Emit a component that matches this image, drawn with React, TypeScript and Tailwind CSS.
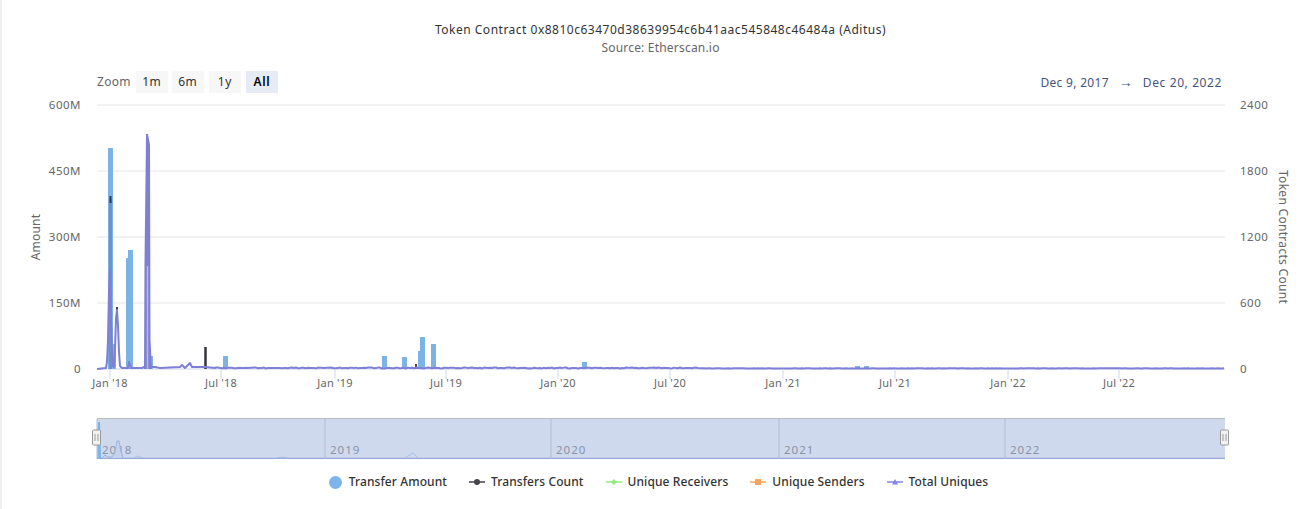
const font = "font-['Noto_Sans',sans-serif]";

const bars: [number, number, number][] = [
  [108, 113, 148], [113, 116, 344], [126, 128, 258], [128, 133, 250], [149, 153, 356],
  [223, 228, 356], [382, 387, 356], [402, 407, 357], [418, 420, 351], [420, 425, 337],
  [431, 436, 344], [582, 587, 362], [855, 860, 366], [864, 869, 366],
];

const spikes: [number, number][] = [
  [97, 369], [106, 368], [107, 362], [108, 340], [109, 290], [110, 270], [111, 320], [112, 352], [113, 366],
  [114, 367], [115, 350], [116, 318], [117, 310], [118, 325], [119, 352], [120, 366], [122, 368],
  [128, 368], [129, 362], [131, 368], [142, 368], [144, 367],
];

const afterSpike: [number, number][] = [
  [152, 367], [155, 367], [160, 368], [180, 367], [182, 365], [185, 368], [190, 363], [192, 367], [205, 367], [215, 368],
];

// small deterministic jitter for the flat tail of the series
function tail() {
  const pts: string[] = [];
  for (let x = 216; x <= 1225; x += 2) {
    const n = Math.sin(x * 12.9898) * 43758.5453;
    const r = n - Math.floor(n);
    const amp = x < 700 ? 1 : 0.3;
    pts.push(`${x},${(368.5 - r * amp).toFixed(1)}`);
  }
  return pts.join(" ");
}

const toPoints = (p: [number, number][]) => p.map(([x, y]) => `${x},${y}`).join(" ");
const purpleLine = toPoints(spikes) + " 146,367 " + toPoints(afterSpike) + " " + tail();

const grid = [
  { y: 105, left: "600M", right: "2400" },
  { y: 171, left: "450M", right: "1800" },
  { y: 237, left: "300M", right: "1200" },
  { y: 303, left: "150M", right: "600" },
  { y: 369, left: "0", right: "0" },
];

const months = [
  { x: 110, t: "Jan '18" }, { x: 221, t: "Jul '18" }, { x: 335, t: "Jan '19" }, { x: 446, t: "Jul '19" },
  { x: 558, t: "Jan '20" }, { x: 670, t: "Jul '20" }, { x: 783, t: "Jan '21" }, { x: 895, t: "Jul '21" },
  { x: 1008, t: "Jan '22" }, { x: 1119, t: "Jul '22" },
];

const years = [
  { x: 97, t: "2018" }, { x: 325, t: "2019" }, { x: 551, t: "2020" }, { x: 779, t: "2021" }, { x: 1005, t: "2022" },
];

function Handle({ x }: { x: number }) {
  return (
    <g transform={`translate(${x},430)`}>
      <rect x="-4" y="0" width="8" height="15" rx="1" fill="#f2f2f2" stroke="#999" />
      <path d="M-1.5 4V11M1.5 4V11" stroke="#999" fill="none" />
    </g>
  );
}

function Chart() {
  return (
    <svg width="1304" height="365" viewBox="0 0 1304 365" className="block">
      <g transform="translate(-2,-94)">
        {grid.map((g) => (
          <g key={g.y}>
            <line x1="97" x2="1225" y1={g.y} y2={g.y} stroke={g.y === 369 ? "#ccd6eb" : "#e6e6e6"} />
            <text x="81" y={g.y + 4} textAnchor="end" fontSize="11.5" fill="#666" letterSpacing="0.5">{g.left}</text>
            <text x="1240" y={g.y + 4} fontSize="11.5" fill="#666" letterSpacing="0.5">{g.right}</text>
          </g>
        ))}
        <text transform="translate(40,237) rotate(-90)" textAnchor="middle" fontSize="12" fill="#666" letterSpacing="0.2">Amount</text>
        <text transform="translate(1279,237) rotate(90)" textAnchor="middle" fontSize="12" fill="#666" letterSpacing="0.3">Token Contracts Count</text>

        {bars.map(([a, b, top]) => (
          <rect key={a} x={a} y={top} width={b - a} height={369 - top} fill="#7cb2e4" />
        ))}
        <rect x="109" y="199" width="3" height="170" fill="#6f94c4" />
        <path d="M110.500 203V196" stroke="#2d3a55" strokeWidth="2" />
        <path d="M117 322V307" stroke="#434348" strokeWidth="2" />
        <path d="M205.500 369V347" stroke="#333338" strokeWidth="2.500" />
        <path d="M416 369V364" stroke="#434348" strokeWidth="2" />
        <polyline points={purpleLine} fill="none" stroke="#7d80d4" strokeWidth="2" strokeLinejoin="round" />
        <path d="M144 369L144.500 262L145.500 180L146 134L148 134L150 145L150.500 340L152 369Z" fill="#7d80d4" />
        <path d="M147.500 369V266" stroke="#b7bbdc" strokeWidth="1.500" />

        {months.map((m) => (
          <g key={m.t}>
            <line x1={m.x} x2={m.x} y1="369" y2="379" stroke="#ccd6eb" />
            <text x={m.x} y="387" textAnchor="middle" fontSize="11" fill="#666" letterSpacing="0.2">{m.t}</text>
          </g>
        ))}

        <rect x="97" y="419" width="1128" height="40" fill="#cfd9ed" />
        <line x1="97" x2="1225" y1="418.500" y2="418.500" stroke="#bbb" />
        <line x1="97" x2="1225" y1="458.500" y2="458.500" stroke="#93a9d8" strokeWidth="1.500" />
        {years.map((y) => (
          <g key={y.t}>
            <line x1={y.x} x2={y.x} y1="419" y2="459" stroke="#b4bccd" />
            <text x={y.x + 5} y="454" fontSize="11.5" fill="#8a93a8" letterSpacing="1">{y.t}</text>
          </g>
        ))}
        <path d="M97.500 458L98 422H100L101 458Z" fill="#7cb5ec" />
        <path d="M102 458L105 455L108 457L112 457L115 452L117 441L119 441L121 452L123 458" fill="#c4d2ec" stroke="#98b4e2" />
        <path d="M134 458L137 456L140 457L143 458M405 458L413 453L418 458M276 458L282 457L288 458" fill="none" stroke="#a9bfe4" />
        <Handle x={96.500} />
        <Handle x={1224.500} />
      </g>
    </svg>
  );
}

function LegendItem({ label, color, marker }: { label: string; color: string; marker: "dot" | "diamond" | "square" | "triangle" }) {
  return (
    <div className="flex items-center gap-[6px]">
      <svg width="16" height="10" viewBox="0 0 16 10">
        <path d="M0 5H16" stroke={color} strokeWidth="1.500" />
        {marker === "dot" && <circle cx="8" cy="5" r="3" fill={color} />}
        {marker === "diamond" && <path d="M8 2L11 5L8 8L5 5Z" fill={color} />}
        {marker === "square" && <rect x="5" y="2" width="6" height="6" fill={color} />}
        {marker === "triangle" && <path d="M8 2L11 7.500H5Z" fill={color} />}
      </svg>
      <span>{label}</span>
    </div>
  );
}

export default function App() {
  return (
    <div className={`${font} w-[1306px] h-[509px] overflow-hidden bg-white border-l-2 border-[#eeeeee] text-[#333]`}>
      <div className="pt-[21px] pl-[13px] text-center text-[12px] leading-[18px]">
        <div className="text-[#333] tracking-[0.5px]">Token Contract 0x8810c63470d38639954c6b41aac545848c46484a (Aditus)</div>
        <div className="text-[#666] tracking-[0.2px]">Source: Etherscan.io</div>
      </div>
      <div className="flex items-center justify-between pl-[95px] pr-[84px] h-[24px] mt-[13px] text-[12px]">
        <div className="flex items-center gap-[3px] tracking-[0.6px]">
          <span className="text-[#666] mr-[1px] tracking-[0.3px]">Zoom</span>
          <button className="w-[32px] h-[22px] ml-[1px] bg-[#f7f7f7] text-[#333]">1m</button>
          <button className="w-[32px] h-[22px] ml-[1px] bg-[#f7f7f7] text-[#333]">6m</button>
          <button className="w-[32px] h-[22px] ml-[2px] bg-[#f7f7f7] text-[#333]">1y</button>
          <button className="w-[32px] h-[22px] ml-[2px] bg-[#e6ebf5] text-[#000] font-semibold">All</button>
        </div>
        <div className="text-[#445580] flex items-center gap-[10px] pt-[1px]">
          <span className="tracking-[0.3px]">Dec 9, 2017</span>
          <span className="text-[14px] leading-[16px] mb-[2px]">→</span>
          <span className="tracking-[0.6px]">Dec 20, 2022</span>
        </div>
      </div>
      <Chart />
      <div className="flex items-center justify-center gap-[22px] mt-[14px] pl-[9px] text-[12px] font-medium text-[#333] tracking-[0.1px]">
        <div className="flex items-center gap-[7px]">
          <span className="w-[13px] h-[13px] rounded-full bg-[#7cb5ec]" />
          <span>Transfer Amount</span>
        </div>
        <LegendItem label="Transfers Count" color="#434348" marker="dot" />
        <LegendItem label="Unique Receivers" color="#90ed7d" marker="diamond" />
        <LegendItem label="Unique Senders" color="#f7a35c" marker="square" />
        <LegendItem label="Total Uniques" color="#8085e9" marker="triangle" />
      </div>
    </div>
  );
}
